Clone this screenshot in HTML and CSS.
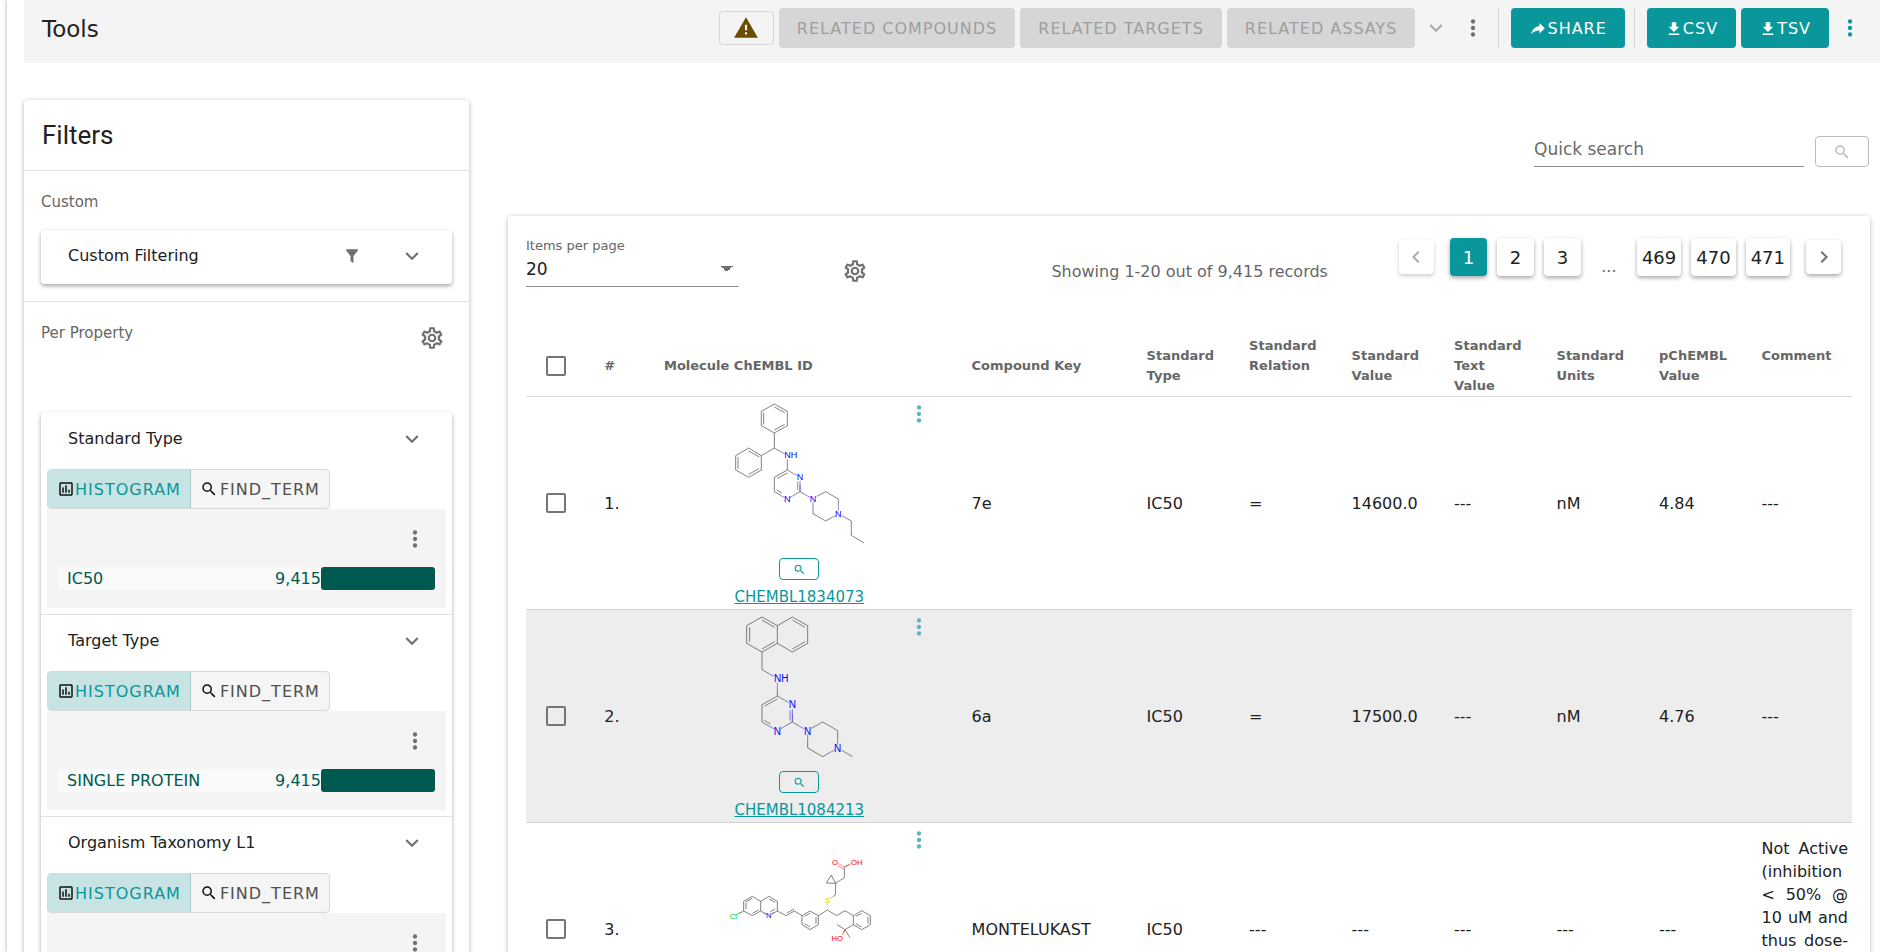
FILE: index.html
```html
<!DOCTYPE html>
<html lang="en">
<head>
<meta charset="utf-8">
<title>Activities</title>
<link rel="stylesheet" href="styles.css">
</head>
<body>
<svg class="symbols" aria-hidden="true">
  <symbol id="cog" viewBox="0 0 24 24"><path d="M12,8A4,4 0 0,1 16,12A4,4 0 0,1 12,16A4,4 0 0,1 8,12A4,4 0 0,1 12,8M12,10A2,2 0 0,0 10,12A2,2 0 0,0 12,14A2,2 0 0,0 14,12A2,2 0 0,0 12,10M10,22C9.75,22 9.54,21.82 9.5,21.58L9.13,18.93C8.5,18.68 7.96,18.34 7.44,17.94L4.95,18.95C4.73,19.03 4.46,18.95 4.34,18.73L2.34,15.27C2.21,15.05 2.27,14.78 2.46,14.63L4.57,12.97L4.5,12L4.57,11L2.46,9.37C2.27,9.22 2.21,8.95 2.34,8.73L4.34,5.27C4.46,5.05 4.73,4.96 4.95,5.05L7.44,6.05C7.96,5.66 8.5,5.32 9.13,5.07L9.5,2.42C9.54,2.18 9.75,2 10,2H14C14.25,2 14.46,2.18 14.5,2.42L14.87,5.07C15.5,5.32 16.04,5.66 16.56,6.05L19.05,5.05C19.27,4.96 19.54,5.05 19.66,5.27L21.66,8.73C21.79,8.95 21.73,9.22 21.54,9.37L19.43,11L19.5,12L19.43,13L21.54,14.63C21.73,14.78 21.79,15.05 21.66,15.27L19.66,18.73C19.54,18.95 19.27,19.04 19.05,18.95L16.56,17.95C16.04,18.34 15.5,18.68 14.87,18.93L14.5,21.58C14.46,21.82 14.25,22 14,22H10M11.25,4L10.88,6.61C9.68,6.86 8.62,7.5 7.85,8.39L5.44,7.35L4.69,8.65L6.8,10.2C6.4,11.37 6.4,12.64 6.8,13.8L4.68,15.36L5.43,16.66L7.86,15.62C8.63,16.5 9.68,17.14 10.87,17.38L11.24,20H12.76L13.13,17.39C14.32,17.14 15.37,16.5 16.14,15.62L18.57,16.66L19.32,15.36L17.2,13.81C17.6,12.64 17.6,11.37 17.2,10.2L19.31,8.65L18.56,7.35L16.15,8.39C15.38,7.5 14.32,6.86 13.12,6.62L12.75,4H11.25Z"/></symbol>
  <symbol id="magnify" viewBox="0 0 24 24"><path d="M9.5,3A6.5,6.5 0 0,1 16,9.5C16,11.11 15.41,12.59 14.44,13.73L14.71,14H15.5L20.5,19L19,20.5L14,15.5V14.71L13.73,14.44C12.59,15.41 11.11,16 9.5,16A6.5,6.5 0 0,1 3,9.5A6.5,6.5 0 0,1 9.5,3M9.5,5C7,5 5,7 5,9.5C5,12 7,14 9.5,14C12,14 14,12 14,9.5C14,7 12,5 9.5,5Z"/></symbol>
  <symbol id="down" viewBox="0 0 24 24"><path d="M7.41,8.58L12,13.17L16.59,8.58L18,10L12,16L6,10L7.41,8.58Z"/></symbol>
  <symbol id="left" viewBox="0 0 24 24"><path d="M15.41,16.58L10.83,12L15.41,7.41L14,6L8,12L14,18L15.41,16.58Z"/></symbol>
  <symbol id="right" viewBox="0 0 24 24"><path d="M8.59,16.58L13.17,12L8.59,7.41L10,6L16,12L10,18L8.59,16.58Z"/></symbol>
  <symbol id="alert" viewBox="0 0 24 24"><path d="M13 14H11V9H13M13 18H11V16H13M1 21H23L12 2L1 21Z"/></symbol>
  <symbol id="share" viewBox="0 0 24 24"><path d="M21,11L14,4V8C7,9 4,14 3,19C5.5,15.5 9,13.9 14,13.9V18L21,11Z"/></symbol>
  <symbol id="download" viewBox="0 0 24 24"><path d="M5,20H19V18H5M19,9H15V3H9V9H5L12,16L19,9Z"/></symbol>
  <symbol id="funnel" viewBox="0 0 24 24"><path d="M14,12V19.88C14.04,20.18 13.94,20.5 13.71,20.71C13.32,21.1 12.69,21.1 12.3,20.71L10.29,18.7C10.06,18.47 9.96,18.16 10,17.87V12H9.97L4.21,4.62C3.87,4.19 3.95,3.56 4.38,3.22C4.57,3.08 4.78,3 5,3V3H19V3C19.22,3 19.43,3.08 19.62,3.22C20.05,3.56 20.13,4.19 19.79,4.62L14.03,12H14Z"/></symbol>
  <symbol id="chart" viewBox="0 0 24 24"><path d="M9 17H7V10H9V17M13 17H11V7H13V17M17 17H15V13H17V17M19 19H5V5H19V19.1M19 3H5C3.9 3 3 3.9 3 5V19C3 20.1 3.9 21 5 21H19C20.1 21 21 20.1 21 19V5C21 3.9 20.1 3 19 3Z"/></symbol>
  <symbol id="dots" viewBox="0 0 24 24"><circle cx="12" cy="6" r="2"/><circle cx="12" cy="12" r="2"/><circle cx="12" cy="18" r="2"/></symbol>
</svg>

<div class="page">
  <header class="toolbar">
    <h1 class="toolbar-title">Tools</h1>
    <div class="actions">
      <button class="btn-warn" aria-label="Warnings"><svg class="icon-l"><use href="#alert"/></svg></button>
      <button class="btn muted" disabled>RELATED COMPOUNDS</button>
      <button class="btn muted" disabled>RELATED TARGETS</button>
      <button class="btn muted" disabled>RELATED ASSAYS</button>
      <button class="icon-btn faint" aria-label="More relations"><svg class="icon-l"><use href="#down"/></svg></button>
      <button class="icon-btn grey" aria-label="Options"><svg class="icon-l"><use href="#dots"/></svg></button>
    </div>
    <div class="actions split">
      <button class="btn teal"><svg class="icon-s"><use href="#share"/></svg>SHARE</button>
    </div>
    <div class="actions split">
      <button class="btn teal"><svg class="icon-s"><use href="#download"/></svg>CSV</button>
      <button class="btn teal"><svg class="icon-s"><use href="#download"/></svg>TSV</button>
      <button class="icon-btn accent" aria-label="Download options"><svg class="icon-l"><use href="#dots"/></svg></button>
    </div>
  </header>

  <div class="columns">
    <aside class="filters">
      <h2 class="filters-title">Filters</h2>
      <section class="group">
        <h3 class="group-title">Custom</h3>
        <div class="panel">
          <button class="panel-head">Custom Filtering<svg class="icon-s push"><use href="#funnel"/></svg><svg class="icon-l"><use href="#down"/></svg></button>
        </div>
      </section>
      <section class="group">
        <div class="group-row">
          <h3 class="group-title">Per Property</h3>
          <button class="icon-btn grey" aria-label="Configure properties"><svg class="icon-l"><use href="#cog"/></svg></button>
        </div>
        <div class="panel">
          <div class="facet">
            <button class="panel-head">Standard Type<svg class="icon-l push"><use href="#down"/></svg></button>
            <div class="facet-body">
              <div class="toggle"><button class="toggle-btn on"><svg class="icon-s dark"><use href="#chart"/></svg>HISTOGRAM</button><button class="toggle-btn"><svg class="icon-s dark"><use href="#magnify"/></svg>FIND_TERM</button></div>
              <div class="histogram">
                <button class="icon-btn grey" aria-label="Histogram options"><svg class="icon-l"><use href="#dots"/></svg></button>
                <div class="bin"><span class="bin-label">IC50</span><span class="bin-count">9,415</span><span class="bin-bar"></span></div>
              </div>
            </div>
          </div>
          <div class="facet">
            <button class="panel-head">Target Type<svg class="icon-l push"><use href="#down"/></svg></button>
            <div class="facet-body">
              <div class="toggle"><button class="toggle-btn on"><svg class="icon-s dark"><use href="#chart"/></svg>HISTOGRAM</button><button class="toggle-btn"><svg class="icon-s dark"><use href="#magnify"/></svg>FIND_TERM</button></div>
              <div class="histogram">
                <button class="icon-btn grey" aria-label="Histogram options"><svg class="icon-l"><use href="#dots"/></svg></button>
                <div class="bin"><span class="bin-label">SINGLE PROTEIN</span><span class="bin-count">9,415</span><span class="bin-bar"></span></div>
              </div>
            </div>
          </div>
          <div class="facet">
            <button class="panel-head">Organism Taxonomy L1<svg class="icon-l push"><use href="#down"/></svg></button>
            <div class="facet-body">
              <div class="toggle"><button class="toggle-btn on"><svg class="icon-s dark"><use href="#chart"/></svg>HISTOGRAM</button><button class="toggle-btn"><svg class="icon-s dark"><use href="#magnify"/></svg>FIND_TERM</button></div>
              <div class="histogram">
                <button class="icon-btn grey" aria-label="Histogram options"><svg class="icon-l"><use href="#dots"/></svg></button>
              </div>
            </div>
          </div>
        </div>
      </section>
    </aside>

    <main class="results">
      <form class="search">
        <input class="search-input" type="text" placeholder="Quick search" aria-label="Quick search">
        <button class="search-btn" type="button" aria-label="Search"><svg class="icon-s"><use href="#magnify"/></svg></button>
      </form>

      <section class="card">
        <div class="controls">
          <div class="per-page">
            <label class="per-page-label" for="per-page">Items per page</label>
            <select class="per-page-select" id="per-page"><option>20</option><option>50</option></select>
          </div>
          <button class="icon-btn grey" aria-label="Configure columns"><svg class="icon-l"><use href="#cog"/></svg></button>
          <p class="summary">Showing 1-20 out of 9,415 records</p>
          <nav class="pager" aria-label="Pages">
            <button class="page-step off" aria-label="Previous"><svg class="icon-m"><use href="#left"/></svg></button>
            <button class="page-num current">1</button>
            <button class="page-num">2</button>
            <button class="page-num">3</button>
            <span class="page-gap">...</span>
            <button class="page-num">469</button>
            <button class="page-num">470</button>
            <button class="page-num">471</button>
            <button class="page-step" aria-label="Next"><svg class="icon-m"><use href="#right"/></svg></button>
          </nav>
        </div>

        <table class="data">
          <colgroup><col class="c-check"><col class="c-num"><col class="c-mol"><col class="c-key"><col><col><col><col><col><col><col></colgroup>
          <thead>
            <tr>
              <th class="check"><input class="box" type="checkbox" aria-label="Select all"></th>
              <th>#</th><th>Molecule ChEMBL ID</th><th>Compound Key</th><th>Standard Type</th><th class="raised">Standard Relation</th><th>Standard Value</th><th>Standard Text<br>Value</th><th>Standard Units</th><th>pChEMBL Value</th><th class="raised">Comment</th>
            </tr>
          </thead>
          <tbody>
            <tr>
              <td class="check"><input class="box" type="checkbox" aria-label="Select row 1"></td>
              <td>1.</td>
              <td class="mol"><div class="mol-grid">
                <div class="mol-main">
                  <svg class="structure" viewBox="75 21 450 480">
                    <path class="bond" d="M226 42L265 64V107L226 129L187 107V64ZM226 51L257 68M257 103L226 120M194 103V68M226 129V174L187 197M149 174L187 197V240L149 262L110 240V197ZM149 183L181 201M180 236L149 253M117 236V201M226 174L245 185M265 219V240L226 262V305L245 316M265 249L234 266M233 300L248 309M265 240L284 251M303 284V305L284 316M303 305L322 316M353 319L380 305L418 327V349M342 349V371L380 393L400 382M430 378L457 393V436L495 459"/>
                    <path class="bond blue" d="M245 185L256 191M265 208V219M284 251L294 256M303 272V305M296 275V300M245 316L256 323M284 316L272 323M322 316L333 322M342 337V349M418 349V362M400 382L410 377"/>
                    <g class="atom blue"><text x="275" y="205">NH</text><text x="303" y="271">N</text><text x="265" y="337">N</text><text x="342" y="337">N</text><text x="418" y="380">N</text></g>
                  </svg>
                  <button class="zoom-btn" aria-label="Enlarge CHEMBL1834073"><svg class="icon-xs"><use href="#magnify"/></svg></button>
                  <a class="mol-link" href="#CHEMBL1834073">CHEMBL1834073</a>
                </div>
                <button class="mol-menu" aria-label="Molecule options"><svg class="icon-l"><use href="#dots"/></svg></button>
              </div></td>
              <td>7e</td><td>IC50</td><td>=</td><td>14600.0</td><td>---</td><td>nM</td><td>4.84</td><td>---</td>
            </tr>
            <tr class="alt">
              <td class="check"><input class="box" type="checkbox" aria-label="Select row 2"></td>
              <td>2.</td>
              <td class="mol"><div class="mol-grid">
                <div class="mol-main">
                  <svg class="structure" viewBox="75 27 450 480">
                    <path class="bond" d="M189 48L235 74V127L189 153L143 127V74ZM235 74L280 48L326 74V127L280 153L235 127M189 57L227 79M152 122V79M189 144L227 122M280 57L318 79M318 122L280 144M189 153V206L212 219M235 262V285L189 311V363L212 376M235 294L197 315M196 358L215 369M235 285L257 298M280 338V363L257 376M280 363L302 376M337 382L371 363L416 389V415M326 415V441L371 467L394 454M428 448L461 467"/>
                    <path class="bond blue" d="M212 219L225 226M235 245V262M257 298L269 304M280 324V363M273 327V358M212 376L226 384M257 376L244 384M302 376L315 383M326 401V415M416 415V431M394 454L407 447"/>
                    <g class="atom big blue"><text x="247" y="244">NH</text><text x="280" y="322">N</text><text x="235" y="401">N</text><text x="326" y="401">N</text><text x="416" y="453">N</text></g>
                  </svg>
                  <button class="zoom-btn" aria-label="Enlarge CHEMBL1084213"><svg class="icon-xs"><use href="#magnify"/></svg></button>
                  <a class="mol-link" href="#CHEMBL1084213">CHEMBL1084213</a>
                </div>
                <button class="mol-menu" aria-label="Molecule options"><svg class="icon-l"><use href="#dots"/></svg></button>
              </div></td>
              <td>6a</td><td>IC50</td><td>=</td><td>17500.0</td><td>---</td><td>nM</td><td>4.76</td><td>---</td>
            </tr>
            <tr>
              <td class="check"><input class="box" type="checkbox" aria-label="Select row 3"></td>
              <td>3.</td>
              <td class="mol"><div class="mol-grid">
                <div class="mol-main">
                  <svg class="structure" viewBox="75 6 450 480">
                    <path class="bond" d="M160 226L185 241V270L160 284L134 270V241ZM185 241L210 226L235 241V270L218 279M202 280L185 270M141 242L160 232M141 265V244M160 277L179 267M210 234L229 244M228 264L214 272M235 270L262 284L286 270L309 284M264 276L285 264M309 284L333 270L358 284V311L333 326L309 311V284M316 286L333 277M351 288V308M333 318L316 308M358 284L385 267L413 284L438 269L463 284M463 284L488 269L514 284V311L488 326L463 311V284M470 286L488 277M507 288V308M488 318L470 308M463 311L438 326L414 311M438 326L453 350M438 326L433 336M119 278L134 270M409 222L410 187L382 186L397 162L410 187L436 170V138M409 222L402 227M436 138L450 131"/>
                    <path class="bond blue" d="M194 275L202 280M218 279L226 274"/>
                    <path class="bond red" d="M436 138L417 127M433 144L416 134M436 138L456 128M438 326L430 342"/>
                    <path class="bond green" d="M109 282L126 274"/>
                    <path class="bond yellow" d="M402 227L393 232M385 246V252M385 255V260"/>
                    <g class="atom small"><text class="blue" x="209" y="292">N</text><text class="green" x="103" y="293">Cl</text><text class="yellow" x="386" y="245">S</text><text class="red" x="408" y="132">O</text><text class="red" x="473" y="132">OH</text><text class="red" x="415" y="359">HO</text></g>
                  </svg>
                  <button class="zoom-btn" aria-label="Enlarge molecule"><svg class="icon-xs"><use href="#magnify"/></svg></button>
                </div>
                <button class="mol-menu" aria-label="Molecule options"><svg class="icon-l"><use href="#dots"/></svg></button>
              </div></td>
              <td>MONTELUKAST</td><td>IC50</td><td>---</td><td>---</td><td>---</td><td>---</td><td>---</td>
              <td class="comment">Not Active (inhibition &lt;&nbsp;50%&nbsp;@ 10&nbsp;uM&nbsp;and thus dose-reponse curve not measured)</td>
            </tr>
          </tbody>
        </table>
      </section>
    </main>
  </div>
</div>
</body>
</html>
```

FILE: styles.css
```css
* { box-sizing: border-box; }

body {
  margin: 0;
  background: #fff;
  color: #212121;
  font-family: "DejaVu Sans", Verdana, sans-serif;
  font-size: 16px;
}

h1, h2, h3, p { margin: 0; font-weight: 400; }

button {
  margin: 0;
  padding: 0;
  border: 0;
  background: none;
  color: inherit;
  font: inherit;
  display: inline-flex;
  align-items: center;
  justify-content: center;
}

svg { fill: currentColor; flex: none; }

.symbols { display: none; }
.icon-l { width: 26px; height: 26px; }
.icon-m { width: 24px; height: 24px; }
.icon-s { width: 18px; height: 18px; }
.icon-xs { width: 13px; height: 13px; }
.dark { color: #111; }
.grey { color: #707070; }
.faint { color: #aaa; }
.accent { color: #09979b; }

.page {
  height: 100vh;
  overflow: hidden;
  margin-left: 7px;
  padding-left: 17px;
  box-shadow: 0 0 4px rgba(0, 0, 0, .35);
}

/* Toolbar */
.toolbar {
  display: flex;
  align-items: flex-start;
  height: 63px;
  padding: 8px 14px 0 18px;
  background: #f4f4f4;
}
.toolbar-title { margin-right: auto; font-size: 23px; line-height: 42px; }
.actions { display: flex; align-items: center; gap: 5px; height: 40px; }
.split { margin-left: 9px; padding-left: 12px; border-left: 1px solid #d6d6d6; }
.btn {
  height: 40px;
  padding: 1px 18px 0;
  border-radius: 4px;
  letter-spacing: 1px;
}
.muted { background: #d6d6d6; color: #9e9e9e; }
.teal { background: #09979b; color: #fff; }
.btn-warn {
  width: 55px;
  height: 34px;
  border: 1px solid #d6d6d6;
  border-radius: 4px;
  color: #6a4c00;
}
.icon-btn { width: 32px; height: 32px; }

/* Filters */
.columns { display: flex; align-items: flex-start; }
.filters {
  flex: none;
  width: 445px;
  margin-top: 37px;
  border-radius: 4px;
  box-shadow: 0 1px 5px rgba(0, 0, 0, .3);
}
.filters-title { padding: 16px 18px 15px; font-family: Roboto, sans-serif; font-size: 26px; line-height: 39px; }
.group { padding: 20px 17px 17px; border-top: 1px solid #e0e0e0; }
.group-title { color: #666; font-size: 15px; line-height: 22px; }
.group-row { display: flex; justify-content: space-between; padding-right: 4px; height: 90px; }
.panel { border-radius: 4px; box-shadow: 0 2px 4px rgba(0, 0, 0, .35); }
.group-title + .panel { margin-top: 17px; }
.panel-head { display: flex; width: 100%; height: 54px; padding: 0 27px 3px; gap: 38px; }
.push { margin-left: auto; color: #707070; }
.panel-head .icon-l { color: #707070; }
.facet { border-top: 1px solid #e0e0e0; }
.facet:first-child { border-top-color: transparent; }
.facet-body { padding: 2px 6px 6px; }
.toggle { display: inline-flex; height: 40px; border: 1px solid #d8d8d8; border-radius: 4px; background: #f5f5f5; vertical-align: top; overflow: hidden; }
.toggle-btn { gap: 2px; padding: 0 9px; color: #4f4f4f; letter-spacing: 1px; }
.toggle-btn.on { gap: 0; border-right: 1px solid #a8cccd; background: #c8e3e4; color: #09979b; }
.histogram { display: flex; flex-direction: column; align-items: flex-end; gap: 13px; height: 99px; padding: 14px 11px; background: #f4f4f4; }
.histogram .icon-btn { margin-right: 4px; height: 31px; }
.bin { display: grid; grid-template-columns: 1fr auto 31%; align-items: center; width: 100%; height: 23px; padding-left: 9px; background: #fafafa; color: #00594f; font-size: 16px; }
.bin-bar { height: 23px; border-radius: 3px; background: #00594f; }

/* Search */
.results { flex: 1; min-width: 0; margin: 73px 10px 0 39px; }
.search { display: flex; justify-content: flex-end; gap: 11px; padding-right: 1px; }
.search-input {
  width: 270px;
  height: 31px;
  padding: 0 0 5px;
  border: 0;
  border-bottom: 1px solid #8c8c8c;
  background: none;
  color: #212121;
  font: inherit;
  font-size: 17px;
}
.search-input::placeholder { color: #6b6b6b; opacity: 1; }
.search-btn { width: 54px; height: 31px; border: 1px solid #bdbdbd; border-radius: 4px; color: #bdbdbd; }

/* Results card */
.card { margin-top: 49px; padding: 20px 18px; border-radius: 4px; box-shadow: 0 1px 5px rgba(0, 0, 0, .3); }
.controls { display: flex; align-items: flex-start; height: 89px; }
.controls .icon-btn { margin: 19px 0 0 100px; }
.per-page { display: flex; flex-direction: column; width: 213px; }
.per-page-label { color: #666; font-size: 13px; line-height: 20px; }
.per-page-select {
  height: 31px;
  padding: 0 0 5px;
  border: 0;
  border-bottom: 1px solid #8c8c8c;
  border-radius: 0;
  appearance: none;
  background:
    linear-gradient(to bottom right, #707070 50%, transparent 50%) right 6px top 10px / 6px 6px no-repeat,
    linear-gradient(to bottom left, #707070 50%, transparent 50%) right 12px top 10px / 6px 6px no-repeat;
  color: #212121;
  font: inherit;
  font-size: 17px;
}
.summary { margin-left: auto; padding-top: 25px; color: #666; line-height: 22px; }
.pager { display: flex; align-items: center; gap: 10px; margin: 0 11px 0 71px; padding-top: 2px; }
.page-num, .page-step { height: 38px; border-radius: 4px; background: #fff; box-shadow: 0 2px 4px rgba(0, 0, 0, .35); }
.page-num { min-width: 37px; padding: 0 5px; font-size: 18px; }
.page-step { width: 35px; height: 34px; color: #707070; }
.page-step.off { margin-right: 6px; color: #aaa; box-shadow: 0 2px 4px rgba(0, 0, 0, .2); }
.page-step:last-child { margin-left: 6px; }
.page-num.current { background: #09979b; color: #fff; }
.page-gap { align-self: flex-end; width: 36px; text-align: center; color: #666; font-size: 16px; }

/* Table */
.data { width: 100%; table-layout: fixed; border-collapse: collapse; }
.c-check { width: 5%; }
.c-num { width: 4.5%; }
.c-mol { width: 23.2%; }
.c-key { width: 13.2%; }
.data th {
  height: 71px;
  padding: 11px 6px 0 12px;
  border-bottom: 1px solid #dcdcdc;
  color: #666;
  font-size: 13px;
  font-weight: 700;
  line-height: 20px;
  text-align: left;
}
.data th.raised { padding-bottom: 20px; }
.data td { height: 213px; padding: 0 4px 0 12px; border-bottom: 1px solid #d4d4d4; line-height: 23px; }
.alt { background: #ededed; }
.data .check { padding: 0 0 0 20px; }
.data th.check { padding-top: 10px; }
.box { display: block; width: 20px; height: 20px; margin: 0; border: 2px solid #757575; border-radius: 2px; appearance: none; }
.data .mol { padding-right: 25px; vertical-align: top; }
.mol-grid { display: grid; grid-template-columns: 1fr 150px 1fr; }
.mol-main { grid-column: 2; display: flex; flex-direction: column; align-items: center; }
.structure { width: 150px; height: 160px; }
.zoom-btn { width: 40px; height: 22px; margin: 1px 0 6px; border: 1px solid #09979b; border-radius: 4px; color: #09979b; }
.mol-link { color: #09979b; font-size: 15px; }
.mol-menu { justify-self: end; align-self: start; width: 32px; height: 34px; color: #5bb5bd; }
.data .comment { text-align: justify; }

/* Structure drawings */
.bond { fill: none; stroke: #444; stroke-width: 2; }
.bond.blue { stroke: #44f; }
.bond.red { stroke: #f44; }
.bond.green { stroke: #3c3; }
.bond.yellow { stroke: #cc3; }
.atom { font-family: "Liberation Sans", Arial, sans-serif; font-size: 27px; text-anchor: middle; }
.atom.big { font-size: 30px; }
.atom.small { font-size: 23px; }
.atom.blue, .atom .blue { fill: #00f; }
.atom .red { fill: #f00; }
.atom .green { fill: #0c0; }
.atom .yellow { fill: #cc0; }
```
